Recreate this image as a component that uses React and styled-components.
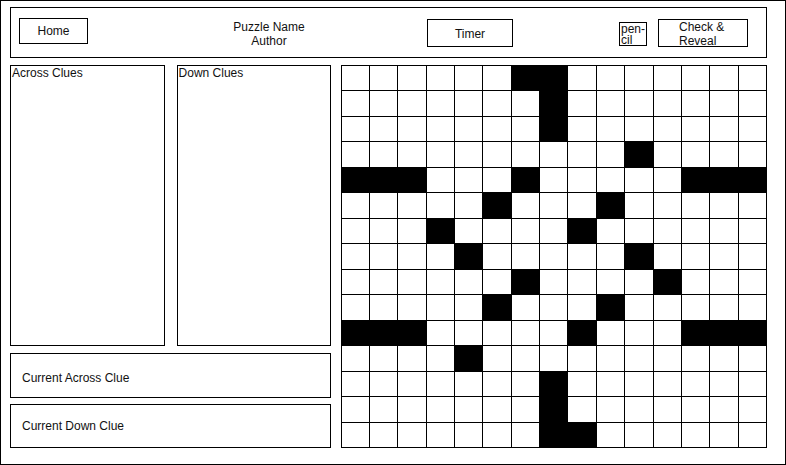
import React from "react";
import styled, { createGlobalStyle } from "styled-components";

const GlobalStyle = createGlobalStyle`
  * { box-sizing: border-box; }
  body {
    margin: 0;
    background: #fff;
    font-family: "Liberation Sans", Arial, sans-serif;
    font-size: 12px;
    color: #111;
  }
`;

// black squares per row of the 15x15 board
const BLACKS = [
  [6, 7],
  [7],
  [7],
  [10],
  [0, 1, 2, 6, 12, 13, 14],
  [5, 9],
  [3, 8],
  [4, 10],
  [6, 11],
  [5, 9],
  [0, 1, 2, 8, 12, 13, 14],
  [4],
  [7],
  [7],
  [7, 8],
];

export default function App() {
  return (
    <>
      <GlobalStyle />
      <Frame>
        <Header>
          <HeaderBox $w={69} $h={26} $ml={0} $mt={-4} $pt={0}>
            Home
          </HeaderBox>
          <Title>
            <div>Puzzle Name</div>
            <div>Author</div>
          </Title>
          <HeaderBox $w={86} $h={28} $ml={98} $mt={0} $pt={3}>
            Timer
          </HeaderBox>
          <Pencil>pen-cil</Pencil>
          <CheckBox>
            Check &amp;
            <br />
            Reveal
          </CheckBox>
        </Header>

        <Main>
          <LeftCol>
            <ClueLists>
              <ClueList $w={155}>Across Clues</ClueList>
              <ClueList $w={154}>Down Clues</ClueList>
            </ClueLists>
            <CurrentClue $h={45} $pt={4}>
              Current Across Clue
            </CurrentClue>
            <CurrentClue $h={44} $pt={0}>
              Current Down Clue
            </CurrentClue>
          </LeftCol>

          <Board>
            {BLACKS.map((row, r) =>
              Array.from({ length: 15 }, (_, c) => (
                <Cell key={`${r}-${c}`} $black={row.includes(c)} />
              ))
            )}
          </Board>
        </Main>
      </Frame>
    </>
  );
}

const Frame = styled.div`
  width: 786px;
  height: 465px;
  border: 1px solid #000;
  padding: 6px 18px 0 9px;
  display: flex;
  flex-direction: column;
  gap: 7px;
`;

const Header = styled.div`
  height: 51px;
  border: 1px solid #000;
  display: flex;
  align-items: center;
  padding: 0 8px;
`;

const HeaderBox = styled.div`
  width: ${(p) => p.$w}px;
  height: ${(p) => p.$h}px;
  margin-left: ${(p) => p.$ml}px;
  margin-top: ${(p) => p.$mt}px;
  padding-top: ${(p) => p.$pt}px;
  border: 1px solid #000;
  display: flex;
  align-items: center;
  justify-content: center;
  flex-shrink: 0;
`;

const Title = styled.div`
  width: 120px;
  margin-left: 121px;
  margin-top: 2px;
  text-align: center;
  line-height: 14px;
  flex-shrink: 0;
`;

const Pencil = styled.div`
  width: 28px;
  height: 24px;
  margin-left: 106px;
  margin-top: 3px;
  border: 1px solid #000;
  line-height: 11px;
  padding: 1px 0 0 1px;
  overflow: hidden;
  flex-shrink: 0;
`;

const CheckBox = styled.div`
  width: 90px;
  height: 28px;
  margin-left: 11px;
  margin-top: 1px;
  border: 1px solid #000;
  line-height: 14px;
  padding: 0 0 0 20px;
  flex-shrink: 0;
`;

const Main = styled.div`
  display: flex;
  gap: 10px;
`;

const LeftCol = styled.div`
  width: 321px;
  display: flex;
  flex-direction: column;
  gap: 6px;
`;

const ClueLists = styled.div`
  display: flex;
  justify-content: space-between;
  margin-bottom: 1px;
`;

const ClueList = styled.div`
  width: ${(p) => p.$w}px;
  height: 281px;
  border: 1px solid #000;
  padding: 0 0 0 1px;
  line-height: 15px;
`;

const CurrentClue = styled.div`
  height: ${(p) => p.$h}px;
  border: 1px solid #000;
  display: flex;
  align-items: center;
  padding: ${(p) => p.$pt}px 0 0 11px;
`;

const Board = styled.div`
  width: 427px;
  height: 383px;
  background: #000;
  padding: 1px;
  display: grid;
  grid-template-columns: repeat(15, 1fr);
  grid-template-rows: repeat(15, 1fr);
  gap: 1px;
`;

const Cell = styled.div`
  background: ${(p) => (p.$black ? "#000" : "#fff")};
`;
